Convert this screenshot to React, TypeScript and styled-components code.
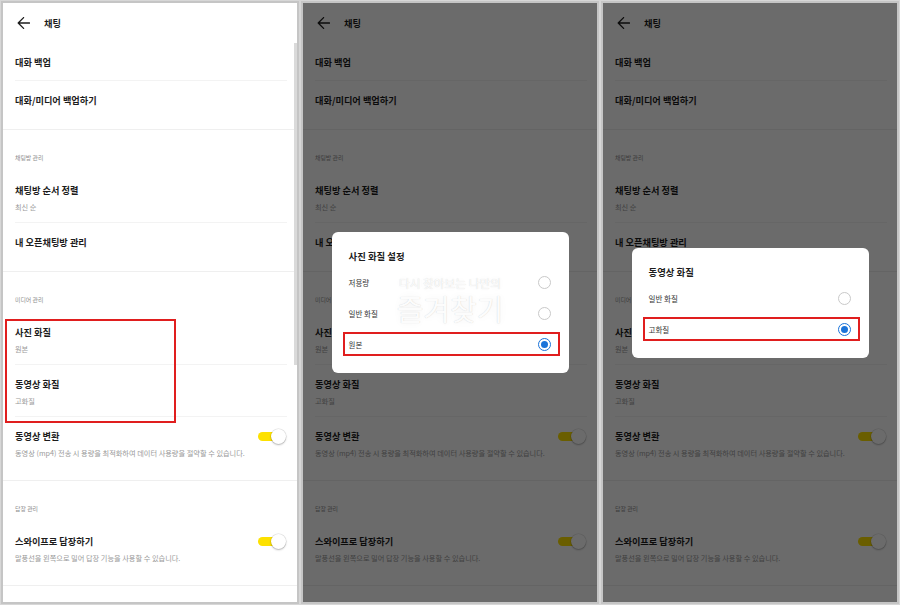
import React from "react";
import styled, { createGlobalStyle } from "styled-components";

const GlobalStyle = createGlobalStyle`
  html, body { margin: 0; padding: 0; }
  body {
    background: #d7d7d7;
    font-family: "Noto Sans CJK KR", "Noto Sans", sans-serif;
    color: #1c1c1c;
  }
`;

interface Item {
  title: string;
  sub?: string;
  toggle?: boolean;
}
interface Section {
  label?: string;
  items: Item[];
  highlight?: [number, number];
}

const sections: Section[] = [
  { items: [{ title: "대화 백업" }, { title: "대화/미디어 백업하기" }] },
  {
    label: "채팅방 관리",
    items: [{ title: "채팅방 순서 정렬", sub: "최신 순" }, { title: "내 오픈채팅방 관리" }],
  },
  {
    label: "미디어 관리",
    highlight: [0, 2],
    items: [
      { title: "사진 화질", sub: "원본" },
      { title: "동영상 화질", sub: "고화질" },
      {
        title: "동영상 변환",
        sub: "동영상 (mp4) 전송 시 용량을 최적화하여 데이터 사용량을 절약할 수 있습니다.",
        toggle: true,
      },
    ],
  },
  {
    label: "답장 관리",
    items: [
      {
        title: "스와이프로 답장하기",
        sub: "말풍선을 왼쪽으로 밀어 답장 기능을 사용할 수 있습니다.",
        toggle: true,
      },
    ],
  },
];

const BackArrow = () => (
  <svg width="13" height="12" viewBox="0 0 13 12" fill="none">
    <path d="M12.5 6H1.2M6.6 0.6L1.2 6l5.4 5.4" stroke="#1c1c1c" strokeWidth="1.3" strokeLinecap="round" strokeLinejoin="round" />
  </svg>
);

const ItemRow = ({ item, last }: { item: Item; last: boolean }) => (
  <Row $twoLine={!!item.sub} $last={last}>
    <RowText>
      <RowTitle>{item.title}</RowTitle>
      {item.sub && <RowSub>{item.sub}</RowSub>}
    </RowText>
    {item.toggle && <Switch />}
  </Row>
);

const SettingsList = ({ annotated }: { annotated?: boolean }) => (
  <>
    <Header>
      <BackArrow />
      <HeaderTitle>채팅</HeaderTitle>
    </Header>
    {sections.map((s, si) => {
      const rows = s.items.map((it, i) => (
        <ItemRow key={it.title} item={it} last={i === s.items.length - 1} />
      ));
      return (
        <Group key={si}>
          {s.label && <GroupLabel>{s.label}</GroupLabel>}
          {annotated && s.highlight ? (
            <>
              <Marked>{rows.slice(s.highlight[0], s.highlight[1])}</Marked>
              {rows.slice(s.highlight[1])}
            </>
          ) : (
            rows
          )}
        </Group>
      );
    })}
  </>
);

interface DialogProps {
  title: string;
  options: string[];
  selected: number;
  watermark?: boolean;
}

const QualityDialog = ({ title, options, selected, watermark }: DialogProps) => (
  <Dim>
    <Dialog>
      <DialogTitle>{title}</DialogTitle>
      {options.map((o, i) => (
        <Option key={o} $marked={i === selected}>
          <span>{o}</span>
          <Radio $on={i === selected} />
        </Option>
      ))}
      {watermark && (
        <Watermark>
          <small>다시 찾아보는 나만의</small>
          <strong>즐겨찾기</strong>
        </Watermark>
      )}
    </Dialog>
  </Dim>
);

const App = () => (
  <>
    <GlobalStyle />
    <Page>
      <Phone>
        <SettingsList annotated />
        <Scrollbar />
      </Phone>
      <Phone>
        <SettingsList />
        <QualityDialog title="사진 화질 설정" options={["저용량", "일반 화질", "원본"]} selected={2} watermark />
      </Phone>
      <Phone>
        <SettingsList />
        <QualityDialog title="동영상 화질" options={["일반 화질", "고화질"]} selected={1} />
      </Phone>
    </Page>
  </>
);

export default App;

const Page = styled.div`
  display: flex;
  gap: 6px;
  padding: 3px;
  width: 900px;
  height: 605px;
  box-sizing: border-box;
`;

const Phone = styled.div`
  position: relative;
  flex: none;
  width: 294px;
  height: 599px;
  background: #fff;
  overflow: hidden;
  box-shadow: 0 0 0 2px #c5c5c5;
`;

const Header = styled.div`
  display: flex;
  align-items: center;
  gap: 14px;
  height: 40px;
  padding-left: 14px;
`;

const HeaderTitle = styled.span`
  font-size: 9.2px;
  font-weight: 700;
  line-height: 12px;
`;

const Group = styled.div`
  padding: 0 10px 11px 12px;
  border-bottom: 1px solid #efefef;
`;

const GroupLabel = styled.div`
  padding: 22px 0 7px;
  font-size: 5.9px;
  line-height: 12px;
  color: #8c8c8c;
`;

const Row = styled.div<{ $twoLine: boolean; $last: boolean }>`
  display: flex;
  align-items: flex-start;
  justify-content: space-between;
  box-sizing: border-box;
  height: ${({ $twoLine }) => ($twoLine ? 52 : 38)}px;
  padding-top: 12px;
  border-bottom: 1px solid #f3f3f3;
  ${({ $last }) => $last && "border-bottom: none; height: auto; padding-bottom: 11px;"}
`;

const RowText = styled.div`
  display: flex;
  flex-direction: column;
  gap: 5px;
`;

const RowTitle = styled.span`
  font-size: 9.2px;
  font-weight: 700;
  line-height: 14px;
  color: #1c1c1c;
`;

const RowSub = styled.span`
  font-size: 7.2px;
  line-height: 10px;
  color: #9a9a9a;
  white-space: nowrap;
`;

const Switch = styled.span`
  position: relative;
  flex: none;
  width: 28px;
  height: 15px;
  margin-right: 1px;
  &::before {
    content: "";
    position: absolute;
    left: 0;
    top: 3px;
    width: 24px;
    height: 9px;
    border-radius: 5px;
    background: #fde100;
  }
  &::after {
    content: "";
    position: absolute;
    right: 0;
    top: 0;
    width: 15px;
    height: 15px;
    border-radius: 50%;
    background: #fff;
    box-shadow: 0 0 0 0.5px rgba(0, 0, 0, 0.12), 0 1px 2px rgba(0, 0, 0, 0.25);
  }
`;

const Marked = styled.div`
  position: relative;
  &::after {
    content: "";
    position: absolute;
    top: 6px;
    bottom: -6px;
    left: -10px;
    width: 171px;
    box-sizing: border-box;
    border: 2px solid #e01e1e;
    pointer-events: none;
  }
`;

const Scrollbar = styled.div`
  position: absolute;
  right: 0;
  top: 40px;
  width: 3px;
  height: 322px;
  background: #dadada;
`;

const Dim = styled.div`
  position: absolute;
  inset: 0;
  display: flex;
  align-items: center;
  justify-content: center;
  background: rgba(0, 0, 0, 0.58);
`;

const Dialog = styled.div`
  position: relative;
  width: 237px;
  box-sizing: border-box;
  padding: 0 17px 13px;
  background: #fff;
  border-radius: 6px;
`;

const DialogTitle = styled.div`
  padding: 18px 0 4px;
  font-size: 9.4px;
  font-weight: 700;
  line-height: 13px;
  color: #1c1c1c;
`;

const Option = styled.div<{ $marked: boolean }>`
  position: relative;
  display: flex;
  align-items: center;
  justify-content: space-between;
  height: 31px;
  padding-right: 1px;
  font-size: 7.5px;
  color: #333;
  &::after {
    content: "";
    display: ${({ $marked }) => ($marked ? "block" : "none")};
    position: absolute;
    top: 3px;
    bottom: 4px;
    left: -6px;
    right: -8px;
    border: 2px solid #e01e1e;
    pointer-events: none;
  }
`;

const Radio = styled.span<{ $on: boolean }>`
  flex: none;
  width: 13px;
  height: 13px;
  box-sizing: border-box;
  border-radius: 50%;
  border: ${({ $on }) => ($on ? "1.5px solid #1a73d9" : "1px solid #c9c9c9")};
  display: flex;
  align-items: center;
  justify-content: center;
  &::after {
    content: "";
    display: ${({ $on }) => ($on ? "block" : "none")};
    width: 7px;
    height: 7px;
    border-radius: 50%;
    background: #1a73d9;
  }
`;

const Watermark = styled.div`
  position: absolute;
  top: 43px;
  left: 0;
  right: 0;
  display: flex;
  flex-direction: column;
  align-items: center;
  gap: 2px;
  pointer-events: none;
  color: #fcfcfc;
  text-shadow: 0 0 1px rgba(0, 0, 0, 0.18), 0 0 8px rgba(0, 0, 0, 0.06);
  small {
    font-size: 11.7px;
    line-height: 16px;
  }
  strong {
    font-size: 29px;
    font-weight: 400;
    line-height: 30px;
  }
`;
